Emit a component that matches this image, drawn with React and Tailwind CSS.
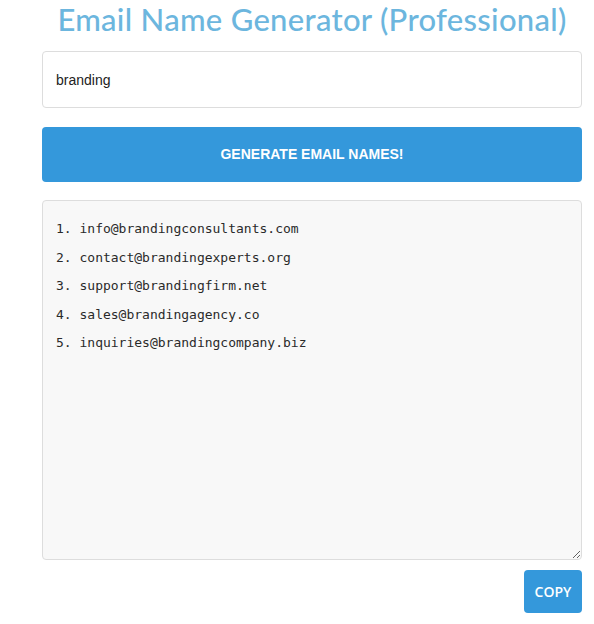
const emails = [
  "info@brandingconsultants.com",
  "contact@brandingexperts.org",
  "support@brandingfirm.net",
  "sales@brandingagency.co",
  "inquiries@brandingcompany.biz",
];

export default function App() {
  const text = emails.map((e, i) => `${i + 1}. ${e}`).join("\n");

  return (
    <div className="min-h-[624px] w-full bg-white">
      <div className="ml-[42px] w-[540px]">
        <h1 className="text-center text-[31px] leading-[38px] font-medium text-[#6cb6de] font-['Lato',sans-serif] tracking-[0.3px]">
          Email Name Generator (Professional)
        </h1>

        <input
          type="text"
          defaultValue="branding"
          className="mt-[13px] block h-[57px] w-full rounded-[4px] border border-[#dddddd] bg-white px-[13px] text-[14px] text-[#222] font-['Liberation_Sans',Arial,sans-serif] outline-none"
        />

        <button className="mt-[19px] flex h-[55px] w-full items-center justify-center rounded-[4px] bg-[#3498db] text-[14px] font-bold uppercase text-white font-['Liberation_Sans',Arial,sans-serif]">
          Generate Email Names!
        </button>

        <textarea
          readOnly
          value={text}
          className="mt-[18px] block h-[360px] w-full rounded-[4px] border border-[#dddddd] bg-[#f8f8f8] px-[13px] pt-[14px] text-[13px] leading-[28.6px] text-[#2a2a2a] font-['DejaVu_Sans_Mono',monospace] outline-none resize-y"
        />

        <div className="mt-[10px] flex justify-end">
          <button className="h-[43px] w-[58px] rounded-[4px] bg-[#3498db] text-[14px] font-semibold text-white font-['Open_Sans',sans-serif]">
            COPY
          </button>
        </div>
      </div>
    </div>
  );
}
